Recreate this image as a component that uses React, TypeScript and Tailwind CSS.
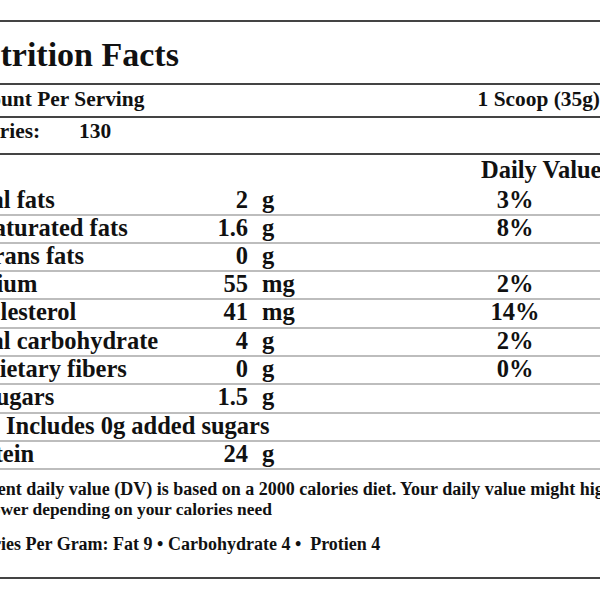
const rows = [
  { name: "Total fats", amt: "2", unit: "g", dv: "3%", indent: "pl-0", h: "h-[28px]" },
  { name: "Saturated fats", amt: "1.6", unit: "g", dv: "8%", indent: "pl-[23px]", h: "h-[28px]" },
  { name: "Trans fats", amt: "0", unit: "g", dv: "", indent: "pl-[22px]", h: "h-[28px]" },
  { name: "Sodium", amt: "55", unit: "mg", dv: "2%", indent: "pl-0", h: "h-[28px]" },
  { name: "Cholesterol", amt: "41", unit: "mg", dv: "14%", indent: "pl-0", h: "h-[29px]" },
  { name: "Total carbohydrate", amt: "4", unit: "g", dv: "2%", indent: "pl-0", h: "h-[28px]" },
  { name: "Dietary fibers", amt: "0", unit: "g", dv: "0%", indent: "pl-[25px]", h: "h-[28px]" },
  { name: "Sugars", amt: "1.5", unit: "g", dv: "", indent: "pl-[25px]", h: "h-[29px]" },
  { name: "Includes 0g added sugars", amt: "", unit: "", dv: "", indent: "pl-[49px]", h: "h-[28px]" },
  { name: "Protein", amt: "24", unit: "g", dv: "", indent: "pl-0", h: "h-[28px]" },
];

export default function App() {
  return (
    <div
      className="w-[600px] h-[600px] overflow-hidden bg-white pt-[20px] text-[#111] font-bold"
      style={{ fontFamily: '"Liberation Serif", "Times New Roman", serif' }}
    >
      <div className="ml-[-43px] w-[643px]">
        {/* Title */}
        <div className="border-t-2 border-b-2 border-[#444] pt-[16px] pb-[11px] text-[34px] leading-[34px] whitespace-nowrap">
          Nutrition Facts
        </div>

        {/* Serving */}
        <div className="flex justify-between border-b-2 border-[#444] pt-[4px] pb-[6px] text-[21.4px] leading-[21px] whitespace-nowrap">
          <span>Amount Per Serving</span>
          <span>1 Scoop (35g)</span>
        </div>

        {/* Calories */}
        <div className="flex border-b-2 border-[#444] pt-[3px] pb-[11px] text-[21.4px] leading-[21px] whitespace-nowrap">
          <span className="w-[122px]">Calories:</span>
          <span>130</span>
        </div>

        {/* Nutrients */}
        <div className="text-[24.5px] leading-[24px] whitespace-nowrap">
          <div className="h-[33px] pt-[3px] pl-[524px]">Daily Value*</div>
          {rows.map((r) => (
            <div key={r.name} className={`flex border-b-2 border-[#bdbdbd] ${r.h}`}>
              <div className="w-[291px] flex justify-between">
                <span className={r.indent}>{r.name}</span>
                <span>{r.amt}</span>
              </div>
              <div className="w-[207px] pl-[14px]">{r.unit}</div>
              <div className="w-[120px] text-center">{r.dv}</div>
            </div>
          ))}
        </div>

        {/* Footnote */}
        <div className="border-b-2 border-[#444] pt-[9px] pb-[23px] text-[18px] leading-[20px] whitespace-nowrap">
          <div className="pl-[6px]">Percent daily value (DV) is based on a 2000 calories diet. Your daily value might higher or</div>
          <div className="pl-[30px] text-[17.4px]">lower depending on your calories need</div>
          <div className="mt-[15px]">Calories Per Gram: Fat 9 • Carbohydrate 4 •&nbsp; Protien 4</div>
        </div>
      </div>
    </div>
  );
}
